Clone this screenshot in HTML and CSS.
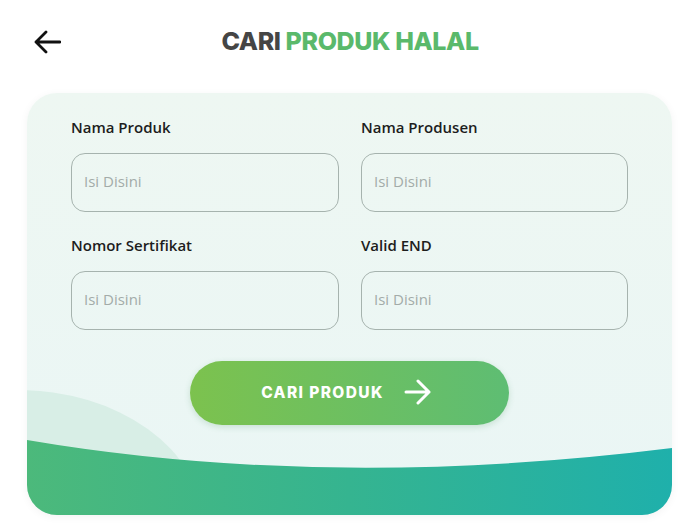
FILE: index.html
```html
<!DOCTYPE html>
<html lang="id">
<head>
<meta charset="utf-8">
<title>Cari Produk Halal</title>
<link rel="stylesheet" href="styles.css">
</head>
<body>
<header class="topbar">
  <button class="back" aria-label="Kembali">
    <svg width="28" height="24" viewBox="0 0 28 24"><path d="M27 12H3M13 2 3 12l10 10" fill="none" stroke="#111" stroke-width="2.8" stroke-linecap="round" stroke-linejoin="round"/></svg>
  </button>
  <h1 class="title"><span class="dark">CARI</span> <span class="green">PRODUK HALAL</span></h1>
</header>
<main class="card">
  <svg class="decor" viewBox="0 0 645 422" preserveAspectRatio="none">
    <defs>
      <linearGradient id="wave" x1="0" y1="0" x2="1" y2="0">
        <stop offset="0" stop-color="#4cb97b"/>
        <stop offset="0.5" stop-color="#35b490"/>
        <stop offset="1" stop-color="#1fb0ab"/>
      </linearGradient>
    </defs>
    <ellipse cx="-10" cy="430" rx="185" ry="133" fill="#d8eee6"/>
    <path d="M0 347 Q 300 398 645 355 L645 422 L0 422 Z" fill="url(#wave)"/>
  </svg>
  <form class="form">
    <div class="grid">
      <label class="field"><span class="label">Nama Produk</span><input class="input" placeholder="Isi Disini"></label>
      <label class="field"><span class="label">Nama Produsen</span><input class="input" placeholder="Isi Disini"></label>
      <label class="field"><span class="label">Nomor Sertifikat</span><input class="input" placeholder="Isi Disini"></label>
      <label class="field"><span class="label">Valid END</span><input class="input" placeholder="Isi Disini"></label>
    </div>
    <button type="button" class="submit">CARI PRODUK
      <svg width="28" height="26" viewBox="0 0 28 26"><path d="M2 13h23M14 2l11 11-11 11" fill="none" stroke="#fff" stroke-width="3" stroke-linecap="round" stroke-linejoin="round"/></svg>
    </button>
  </form>
</main>
</body>
</html>
```

FILE: styles.css
```css
* { box-sizing: border-box; }
html, body { margin: 0; padding: 0; background: #fff; }
body {
  width: 700px;
  height: 525px;
  overflow: hidden;
  font-family: "Open Sans", "Noto Sans", sans-serif;
}
.topbar {
  position: relative;
  height: 93px;
  display: flex;
  align-items: flex-start;
  justify-content: center;
}
.back {
  position: absolute;
  left: 33px;
  top: 30px;
  border: 0;
  background: none;
  padding: 0;
  width: 28px;
  height: 24px;
  display: flex;
}
.title {
  margin: 26px 0 0;
  font-family: "Inter", "Liberation Sans", sans-serif;
  font-weight: 800;
  font-size: 25px;
  line-height: 30px;
  letter-spacing: -0.4px;
}
.dark { color: #454545; }
.green { color: #5ab96b; }
.card {
  position: relative;
  margin: 0 28px 0 27px;
  height: 422px;
  border-radius: 30px;
  overflow: hidden;
  background: linear-gradient(180deg, #eef7f2 0%, #eaf6f5 100%);
  box-shadow: 0 2px 8px rgba(0,0,0,0.05);
}
.decor {
  position: absolute;
  left: 0;
  top: 0;
  width: 100%;
  height: 100%;
}
.form {
  position: relative;
  padding: 24px 44px 0;
  display: flex;
  flex-direction: column;
  align-items: center;
}
.grid {
  width: 100%;
  display: grid;
  grid-template-columns: 268px 267px;
  column-gap: 22px;
  row-gap: 23px;
}
.field {
  display: flex;
  flex-direction: column;
  gap: 16px;
}
.label {
  font-family: "Open Sans", "Noto Sans", sans-serif;
  font-weight: 600;
  font-size: 15px;
  line-height: 20px;
  color: #1d1d1d;
}
.input {
  height: 59px;
  border: 1.2px solid #a6b3ae;
  border-radius: 14px;
  background: transparent;
  padding: 0 12px 3px;
  font-family: "Open Sans", "Noto Sans", sans-serif;
  font-size: 15px;
  color: #333;
  outline: none;
}
.input::placeholder { color: #a3aba8; }
.submit {
  margin-top: 31px;
  width: 319px;
  height: 64px;
  border: 0;
  border-radius: 32px;
  background: linear-gradient(90deg, #7cc24e 0%, #5ebd73 100%);
  box-shadow: 0 2px 6px rgba(60,140,80,0.2);
  color: #fff;
  font-family: "Inter", "Liberation Sans", sans-serif;
  font-weight: 800;
  font-size: 15.5px;
  letter-spacing: 1.4px;
  display: flex;
  align-items: center;
  justify-content: center;
  gap: 20px;
  padding: 0 6px 2px 0;
}
.submit svg { flex: none; }
```
